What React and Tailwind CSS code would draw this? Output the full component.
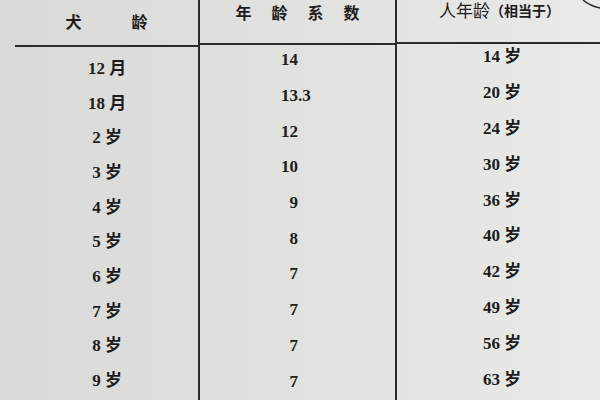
import React from 'react'

const rows = [
  { dog: '12 月', factor: ['14', ''], human: '14 岁' },
  { dog: '18 月', factor: ['13', '.3'], human: '20 岁' },
  { dog: '2 岁', factor: ['12', ''], human: '24 岁' },
  { dog: '3 岁', factor: ['10', ''], human: '30 岁' },
  { dog: '4 岁', factor: ['9', ''], human: '36 岁' },
  { dog: '5 岁', factor: ['8', ''], human: '40 岁' },
  { dog: '6 岁', factor: ['7', ''], human: '42 岁' },
  { dog: '7 岁', factor: ['7', ''], human: '49 岁' },
  { dog: '8 岁', factor: ['7', ''], human: '56 岁' },
  { dog: '9 岁', factor: ['7', ''], human: '63 岁' },
]

const font = { fontFamily: '"Liberation Serif", "Noto Sans CJK SC", serif' }

export default function App() {
  return (
    <div
      style={font}
      className="relative w-[600px] h-[400px] overflow-hidden flex bg-linear-to-r from-[#d9d9d7] via-[#e1e1df] to-[#e9e9e7] text-[#1c1c1c]"
    >
      {/* 犬龄 */}
      <div className="w-[200px] shrink-0 flex flex-col border-r-2 border-[#2b2b2b]">
        <div className="h-[47px] ml-[15px] border-b-2 border-[#2b2b2b] flex items-center justify-center gap-[50px] text-[16px] font-bold">
          <span>犬</span>
          <span>龄</span>
        </div>
        <div className="pt-[4px] flex flex-col">
          {rows.map(r => (
            <div key={r.dog} className="h-[34.7px] flex items-center justify-center pl-[16px] text-[17px] font-bold leading-none">
              {r.dog}
            </div>
          ))}
        </div>
      </div>

      {/* 年龄系数 */}
      <div className="w-[197px] shrink-0 flex flex-col border-r-2 border-[#2b2b2b]">
        <div className="h-[45px] border-b-2 border-[#2b2b2b] flex items-start justify-center gap-[20px] pt-[2px] text-[16px] font-bold">
          <span>年</span>
          <span>龄</span>
          <span>系</span>
          <span>数</span>
        </div>
        <div className="-mt-[3px] flex flex-col">
          {rows.map(r => (
            <div key={r.dog} className="h-[35.7px] flex items-center text-[17px] font-bold leading-none">
              <span className="w-[98px] text-right">{r.factor[0]}</span>
              <span>{r.factor[1]}</span>
            </div>
          ))}
        </div>
      </div>

      {/* 人年龄 */}
      <div className="flex-1 flex flex-col">
        <div className="h-[44px] border-b-2 border-[#2b2b2b] flex items-start pl-[42px] pt-[3px] leading-none">
          <span className="text-[17px]">人年龄</span>
          <span className="text-[14px] mt-[2px] font-bold">（相当于）</span>
        </div>
        <div className="-mt-[5px] flex flex-col">
          {rows.map(r => (
            <div key={r.dog} className="h-[35.8px] flex items-center pl-[86px] text-[17px] font-bold leading-none">
              {r.human}
            </div>
          ))}
        </div>
      </div>

      {/* page edge in the top right corner */}
      <svg className="absolute right-0 top-0" width="20" height="10" viewBox="0 0 20 10">
        <path d="M3 0 Q10 6 20 8" stroke="#2b2b2b" strokeWidth="1.5" fill="none" />
      </svg>
    </div>
  )
}
